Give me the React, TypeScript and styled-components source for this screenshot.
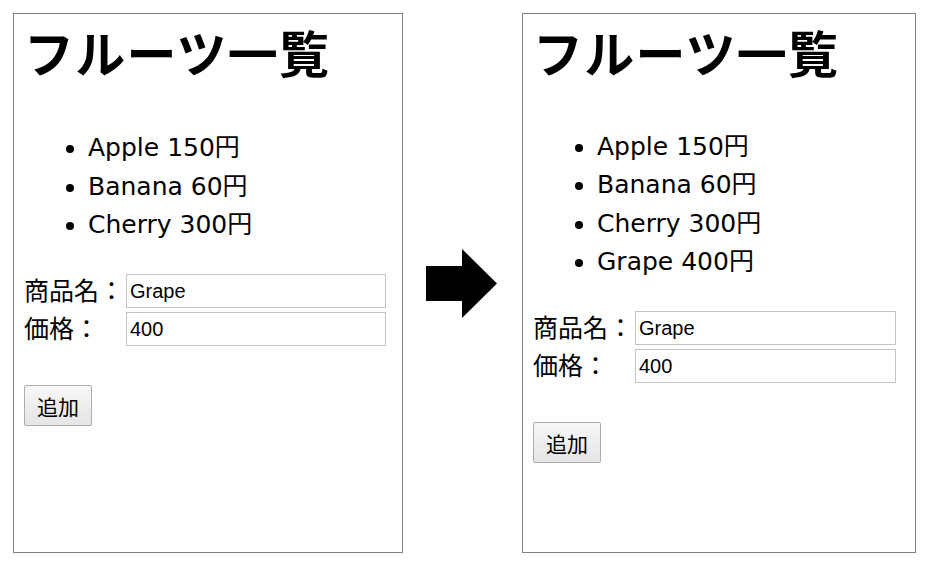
import React from 'react';
import styled, { createGlobalStyle } from 'styled-components';

const GlobalStyle = createGlobalStyle`
  html, body {
    margin: 0;
    padding: 0;
    background: #ffffff;
  }
  body {
    font-family: 'DejaVu Sans', 'Noto Sans CJK JP', sans-serif;
    color: #000;
  }
`;

type Fruit = { name: string; price: number };

const before: Fruit[] = [
  { name: 'Apple', price: 150 },
  { name: 'Banana', price: 60 },
  { name: 'Cherry', price: 300 },
];

const after: Fruit[] = [...before, { name: 'Grape', price: 400 }];

const Page = styled.div`
  display: flex;
  align-items: center;
  padding: 13px;
`;

const Panel = styled.div<{ $width: number }>`
  box-sizing: border-box;
  width: ${(p) => p.$width}px;
  height: 540px;
  border: 1px solid #808080;
  padding: 7px 0 0 10px;
  display: flex;
  flex-direction: column;
  align-items: flex-start;
`;

const Title = styled.h1`
  margin: 0;
  font-family: 'Noto Sans CJK JP', sans-serif;
  font-weight: 700;
  font-size: 50px;
  line-height: 60px;
  letter-spacing: 1.2px;
`;

const List = styled.ul<{ $top: number }>`
  margin: ${(p) => p.$top}px 0 0 0;
  padding-left: 64px;
  font-size: 25px;
  line-height: 38.5px;
`;

const Item = styled.li`
  font-family: 'DejaVu Sans', 'Noto Sans CJK JP', sans-serif;
`;

const Form = styled.div<{ $input: number }>`
  margin-top: 29.5px;
  display: grid;
  grid-template-columns: 102px ${(p) => p.$input}px;
  row-gap: 4px;
  align-items: center;
`;

const Label = styled.label`
  font-family: 'Noto Sans CJK JP', sans-serif;
  font-size: 25px;
  line-height: 30px;
  margin-top: -4px;
`;

const Input = styled.input`
  box-sizing: border-box;
  height: 34px;
  width: 100%;
  margin: 0;
  border: 1px solid #c4c4c4;
  padding: 0 3px;
  font-family: 'Liberation Sans', Arial, sans-serif;
  font-size: 20px;
  color: #000;
  background: #fff;
  outline: none;
`;

const AddButton = styled.button`
  margin-top: 39px;
  width: 68px;
  height: 41px;
  box-sizing: border-box;
  border: 1px solid #acacac;
  border-radius: 2px;
  background: linear-gradient(#f7f7f7, #e5e5e5);
  font-family: 'Noto Sans CJK JP', sans-serif;
  font-size: 21px;
  color: #000;
  padding: 0;
`;

const ArrowWrap = styled.div`
  width: 71px;
  height: 69px;
  margin: 0 25px 0 23px;
  display: flex;
`;

const Arrow = () => (
  <ArrowWrap>
    <svg width="71" height="69" viewBox="0 0 71 69">
      <polygon points="0,17 36,17 36,0 71,34.5 36,69 36,52 0,52" fill="#000" />
    </svg>
  </ArrowWrap>
);

const FruitPanel = ({
  fruits,
  width,
  listTop,
  inputWidth,
}: {
  fruits: Fruit[];
  width: number;
  listTop: number;
  inputWidth: number;
}) => (
  <Panel $width={width}>
    <Title>フルーツ一覧</Title>
    <List $top={listTop}>
      {fruits.map((f) => (
        <Item key={f.name}>
          {f.name} {f.price}円
        </Item>
      ))}
    </List>
    <Form $input={inputWidth}>
      <Label>商品名：</Label>
      <Input defaultValue="Grape" />
      <Label>価格：</Label>
      <Input defaultValue="400" />
    </Form>
    <AddButton>追加</AddButton>
  </Panel>
);

const App = () => (
  <>
    <GlobalStyle />
    <Page>
      <FruitPanel fruits={before} width={390} listTop={48} inputWidth={260} />
      <Arrow />
      <FruitPanel fruits={after} width={394} listTop={46.5} inputWidth={261} />
    </Page>
  </>
);

export default App;
